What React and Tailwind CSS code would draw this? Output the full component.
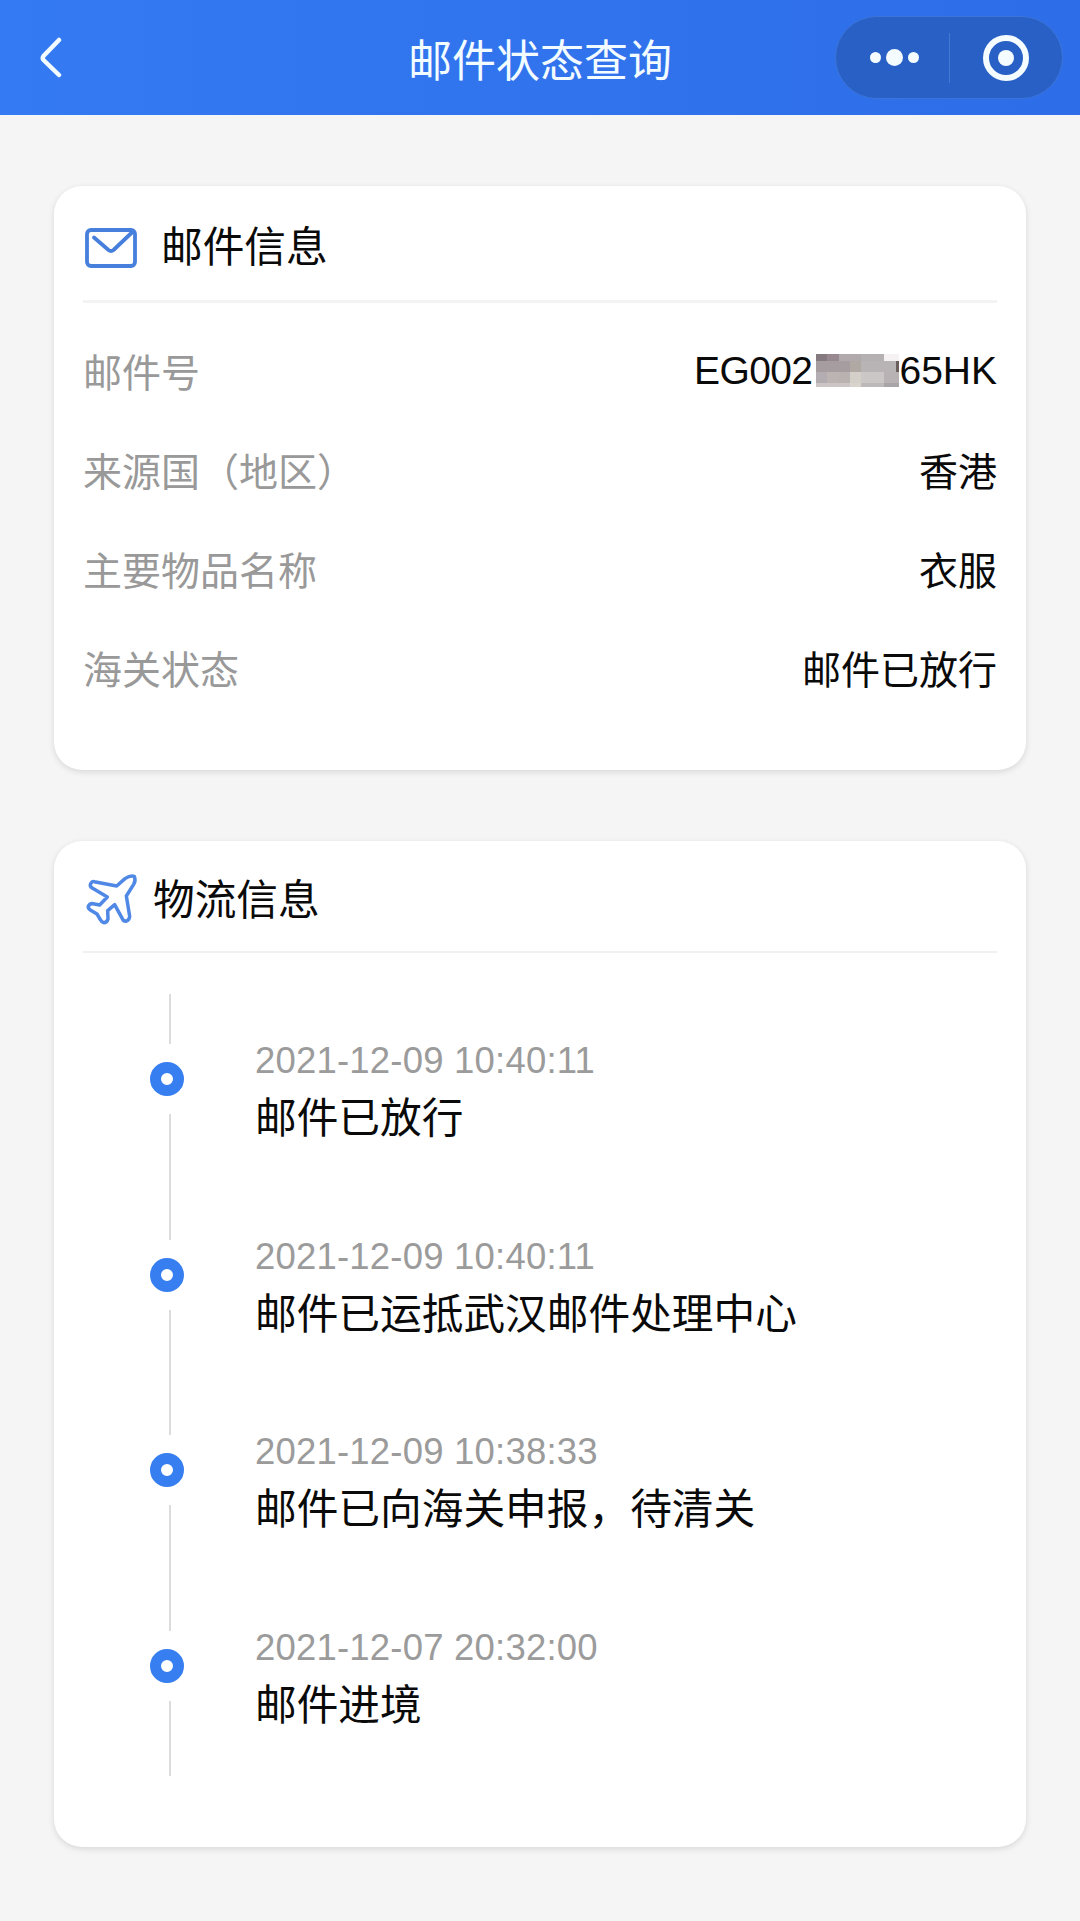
const MAIL_INFO = [
  { label: '邮件号', value: <TrackingNumber /> },
  { label: '来源国（地区）', value: '香港' },
  { label: '主要物品名称', value: '衣服' },
  { label: '海关状态', value: '邮件已放行' },
]

const EVENTS = [
  { time: '2021-12-09 10:40:11', text: '邮件已放行' },
  { time: '2021-12-09 10:40:11', text: '邮件已运抵武汉邮件处理中心' },
  { time: '2021-12-09 10:38:33', text: '邮件已向海关申报，待清关' },
  { time: '2021-12-07 20:32:00', text: '邮件进境' },
]

// [x, y, width, height, fill]
const MOSAIC = [
  [0, 0, 11, 7, '#857a80'],
  [11, 0, 12, 7, '#97898f'],
  [23, 0, 22, 7, '#b0aaac'],
  [45, 0, 23, 7, '#b5b1b2'],
  [68, 0, 15, 7, '#f6f2f3'],
  [0, 7, 34, 11, '#a69da1'],
  [34, 7, 11, 11, '#b0a9a3'],
  [45, 7, 35, 11, '#b8b3b4'],
  [80, 7, 3, 11, '#6a5f5c'],
  [0, 18, 11, 11, '#b3acb0'],
  [11, 18, 12, 11, '#bcb4b2'],
  [23, 18, 11, 11, '#b9b2b0'],
  [34, 18, 11, 11, '#d4cfc8'],
  [45, 18, 23, 11, '#cbc7c7'],
  [68, 18, 15, 11, '#b9b2b4'],
  [0, 29, 34, 4, '#cbc5c5'],
  [34, 29, 11, 4, '#d8d3cd'],
  [45, 29, 23, 4, '#bdb9ba'],
  [68, 29, 15, 4, '#a8a4a8'],
]

function TrackingNumber() {
  return (
    <span className="flex items-center -mt-1.5">
      <span className="tracking-[-0.6px]">EG002</span>
      <svg className="ml-1 block" width="83" height="33" viewBox="0 0 83 33" shapeRendering="crispEdges">
        {MOSAIC.map(([x, y, w, h, fill]) => (
          <rect key={`${x}-${y}`} x={x} y={y} width={w} height={h} fill={fill} />
        ))}
      </svg>
      65HK
    </span>
  )
}

function MailIcon() {
  return (
    <svg className="block" width="52" height="40" viewBox="0 0 52 40" fill="none" stroke="#467fdc" strokeWidth="3.8" strokeLinecap="round" strokeLinejoin="round">
      <rect x="2" y="2" width="48" height="36" rx="4" />
      <path d="M9 9.5 L23.5 22 Q26 24 28.500 22 L48 3.500" />
    </svg>
  )
}

function PlaneIcon() {
  return (
    <svg className="block -mt-[2px]" width="54" height="54" viewBox="75 35 162 162" fill="none" stroke="#5088e6" strokeWidth="10.5" strokeLinejoin="round">
      <path d="M103 64 L170 77 L195 55 Q210 45 223 48 Q228 60 221 72 L199 107 L209 168 Q209 178 200 182 Q191 184 187 175 L164 133 L143 151 L144 176 Q141 187 131 187 Q125 185 121 178 L111 161 L91 149 Q82 143 86 136 Q90 129 99 130 L119 134 L142 110 L98 84 Q88 78 92 70 Q96 62 103 64 Z" />
    </svg>
  )
}

function NavBar() {
  return (
    <header className="h-[115px] px-[17px] grid grid-cols-[1fr_auto_1fr] items-center bg-linear-to-r from-[#347af2] to-[#2d6de8]">
      <button className="justify-self-start ml-[21px]">
        <svg className="block" width="26" height="42" viewBox="0 0 26 42" fill="none" stroke="#f2fbff" strokeWidth="4.5" strokeLinecap="round" strokeLinejoin="round">
          <path d="M21 3 L5.500 19 Q4 21 5.500 23 L21 38" />
        </svg>
      </button>
      <h1 className="text-[44px] leading-[60px] pt-2 text-[#f2fbff]">邮件状态查询</h1>
      <div className="justify-self-end w-[228px] h-[83px] rounded-full border border-[#3c74d9] bg-[#2860c6] flex items-center">
        <div className="w-[113px] flex items-center justify-center gap-[5px] pl-1">
          <span className="size-[11px] rounded-full bg-[#f5fcff]" />
          <span className="size-[17px] rounded-full bg-[#f5fcff]" />
          <span className="size-[11px] rounded-full bg-[#f5fcff]" />
        </div>
        <span className="w-px h-[50px] bg-[#4478d2]" />
        <div className="flex-1 flex justify-center">
          <span className="size-[46px] rounded-full border-[6px] border-[#f5fcff] flex items-center justify-center">
            <span className="size-4 rounded-full bg-[#f5fcff]" />
          </span>
        </div>
      </div>
    </header>
  )
}

function Card({ className, children }) {
  return (
    <section className={`rounded-[28px] bg-white px-[29px] shadow-[0_2px_6px_rgba(0,0,0,0.12)] ${className}`}>
      {children}
    </section>
  )
}

export default function App() {
  return (
    <div className="w-[1080px] h-[1921px] bg-[#f5f5f5] text-[#0a0a0a] font-['Liberation_Sans','Noto_Sans_CJK_SC',sans-serif]">
      <NavBar />
      <main className="px-[54px] pt-[71px] flex flex-col gap-[71px]">
        <Card className="h-[584px]">
          <div className="h-[117px] pl-[2px] pt-[9px] flex items-center gap-6 border-b-3 border-[#f3f3f3]">
            <MailIcon />
            <h2 className="text-[41.700px] leading-[56px]">邮件信息</h2>
          </div>
          <dl className="pt-[21px]">
            {MAIL_INFO.map((row) => (
              <div key={row.label} className="h-[99.2px] flex items-center justify-between text-[39px] leading-[56px]">
                <dt className="text-[#999]">{row.label}</dt>
                <dd>{row.value}</dd>
              </div>
            ))}
          </dl>
        </Card>

        <Card className="h-[1006px]">
          <div className="h-[112px] pl-[2px] pt-[7px] flex items-center gap-[14px] border-b-2 border-[#f1f1f1]">
            <PlaneIcon />
            <h2 className="pt-[2px] text-[41.700px] leading-[56px]">物流信息</h2>
          </div>
          <ol className="pt-[41px]">
            {EVENTS.map((event, i) => (
              <li key={i} className="h-[195.6px] flex">
                <div className="ml-[67px] w-[34px] flex flex-col items-center">
                  <span className="w-[2px] h-[50px] ml-[5px] bg-[#dcdcdc]" />
                  <span className="my-[18px] size-[34px] shrink-0 rounded-full border-[11px] border-[#377ff0] bg-white" />
                  <span className="w-[2px] flex-1 ml-[5px] bg-[#dcdcdc]" />
                </div>
                <div className="ml-[71px] pt-[43px]">
                  <p className="text-[36.500px] leading-[48px] tracking-[0.2px] text-[#9b9b9b]">{event.time}</p>
                  <p className="mt-[3px] text-[41.700px] leading-[62px]">{event.text}</p>
                </div>
              </li>
            ))}
          </ol>
        </Card>
      </main>
    </div>
  )
}
